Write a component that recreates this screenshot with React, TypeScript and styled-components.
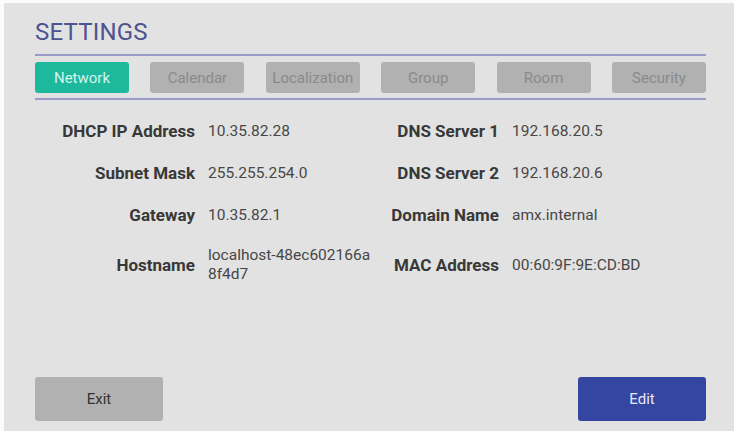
import React from 'react';
import styled, { createGlobalStyle } from 'styled-components';

const GlobalStyle = createGlobalStyle`
  html, body {
    margin: 0;
    padding: 0;
    background: #fbfbfb;
  }
  #root {
    height: 100vh;
  }
`;

const Screen = styled.div`
  box-sizing: border-box;
  height: calc(100vh - 3px);
  margin: 3px 0 0 4px;
  padding: 14px 28px 10px 31px;
  background: #e2e2e2;
  display: flex;
  flex-direction: column;
  font-family: Roboto, "Liberation Sans", sans-serif;
`;

const Title = styled.h1`
  margin: 0 0 7px;
  font-size: 24px;
  font-weight: 400;
  color: #4d5290;
  line-height: 30px;
  letter-spacing: 0.2px;
`;

const Rule = styled.div`
  height: 2px;
  background: #9a9bc8;
`;

const TabBar = styled.div`
  display: flex;
  justify-content: space-between;
  margin: 6px 0 5px;
`;

const Tab = styled.div<{ $active?: boolean }>`
  width: 94px;
  height: 31px;
  border-radius: 3px;
  display: flex;
  align-items: center;
  justify-content: center;
  font-size: 15px;
  background: ${({ $active }) => ($active ? '#1eb89c' : '#b1b1b1')};
  color: ${({ $active }) => ($active ? '#d4f6ef' : '#8a8a8a')};
`;

const Fields = styled.div`
  display: grid;
  grid-template-columns: 160px 166px 112px 1fr;
  column-gap: 13px;
  row-gap: 20px;
  align-items: center;
  margin-top: 20px;
`;

const Label = styled.div`
  text-align: right;
  font-size: 17px;
  font-weight: 700;
  color: #383838;
  line-height: 22px;
  white-space: nowrap;
`;

const Value = styled.div`
  font-size: 15.5px;
  color: #474747;
  line-height: 19px;
  word-break: break-all;
`;

const Footer = styled.div`
  margin-top: auto;
  display: flex;
  justify-content: space-between;
`;

const Button = styled.div<{ $primary?: boolean }>`
  width: 128px;
  height: 44px;
  border-radius: 3px;
  display: flex;
  align-items: center;
  justify-content: center;
  font-size: 15px;
  background: ${({ $primary }) => ($primary ? '#3446a2' : '#b1b1b1')};
  color: ${({ $primary }) => ($primary ? '#e6e8f8' : '#333')};
`;

const tabs = ['Network', 'Calendar', 'Localization', 'Group', 'Room', 'Security'];

const rows: [string, string, string, string][] = [
  ['DHCP IP Address', '10.35.82.28', 'DNS Server 1', '192.168.20.5'],
  ['Subnet Mask', '255.255.254.0', 'DNS Server 2', '192.168.20.6'],
  ['Gateway', '10.35.82.1', 'Domain Name', 'amx.internal'],
  ['Hostname', 'localhost-48ec602166a8f4d7', 'MAC Address', '00:60:9F:9E:CD:BD'],
];

const App = () => (
  <>
    <GlobalStyle />
    <Screen>
      <Title>SETTINGS</Title>
      <Rule />
      <TabBar>
        {tabs.map((t, i) => (
          <Tab key={t} $active={i === 0}>{t}</Tab>
        ))}
      </TabBar>
      <Rule />
      <Fields>
        {rows.map(([l1, v1, l2, v2]) => (
          <React.Fragment key={l1}>
            <Label>{l1}</Label>
            <Value>{v1}</Value>
            <Label>{l2}</Label>
            <Value>{v2}</Value>
          </React.Fragment>
        ))}
      </Fields>
      <Footer>
        <Button>Exit</Button>
        <Button $primary>Edit</Button>
      </Footer>
    </Screen>
  </>
);

export default App;
